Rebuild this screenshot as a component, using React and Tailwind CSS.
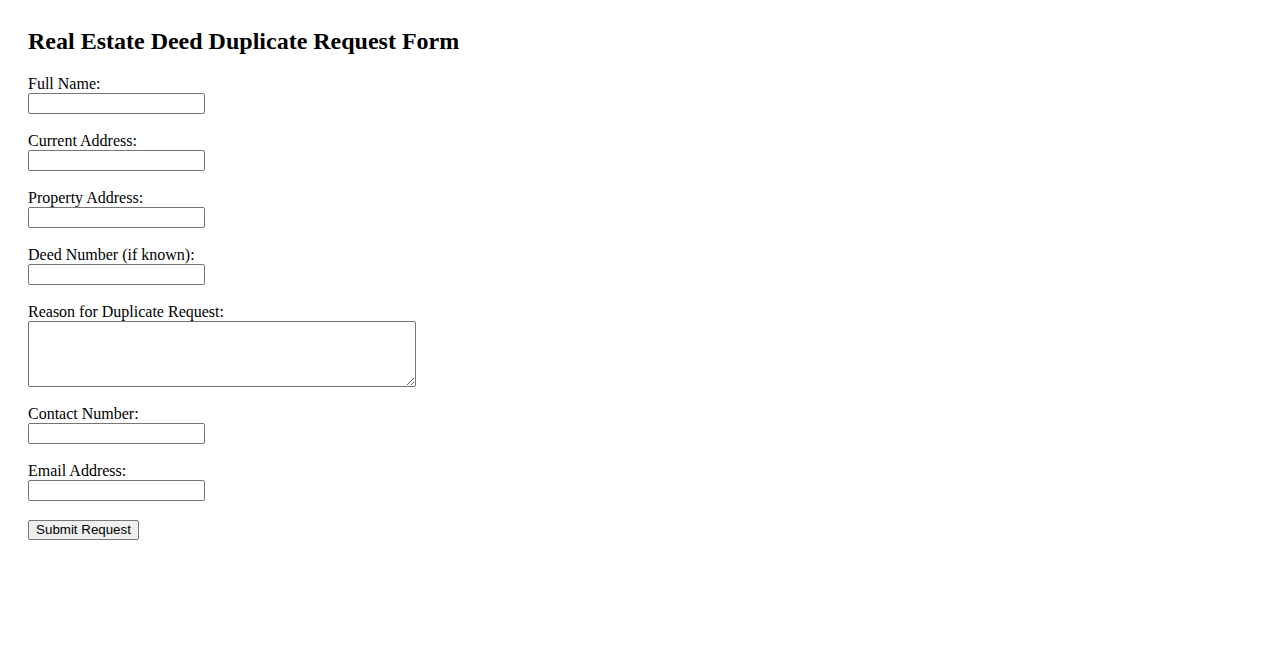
const fields = [
  { label: "Full Name:", type: "text" },
  { label: "Current Address:", type: "text" },
  { label: "Property Address:", type: "text" },
  { label: "Deed Number (if known):", type: "text" },
  { label: "Reason for Duplicate Request:", type: "textarea" },
  { label: "Contact Number:", type: "tel" },
  { label: "Email Address:", type: "email" },
];

export default function App() {
  return (
    <div className="min-h-screen bg-white text-black px-[28px] pt-[28px] font-['Liberation_Serif',serif]">
      <h2 className="text-[24px] font-bold leading-[27px] mb-[20px]">
        Real Estate Deed Duplicate Request Form
      </h2>
      <form className="flex flex-col items-start" onSubmit={(e) => e.preventDefault()}>
        {fields.map((f) => (
          <div key={f.label} className="flex flex-col items-start mb-[18px]">
            <label className="text-[16px] leading-[18px]">{f.label}</label>
            {f.type === "textarea" ? (
              <textarea className="w-[388px] h-[66px] border border-[#767676] rounded-[2px] bg-white block" />
            ) : (
              <input
                type={f.type}
                className="w-[177px] h-[21px] border border-[#767676] rounded-[2px] bg-white block"
              />
            )}
          </div>
        ))}
        <button
          type="submit"
          className="mt-[1px] w-[111px] h-[20px] border border-[#767676] rounded-[2px] bg-[#efefef] text-[13.33px] leading-[16px] font-['Liberation_Sans',Arial,sans-serif]"
        >
          Submit Request
        </button>
      </form>
    </div>
  );
}
